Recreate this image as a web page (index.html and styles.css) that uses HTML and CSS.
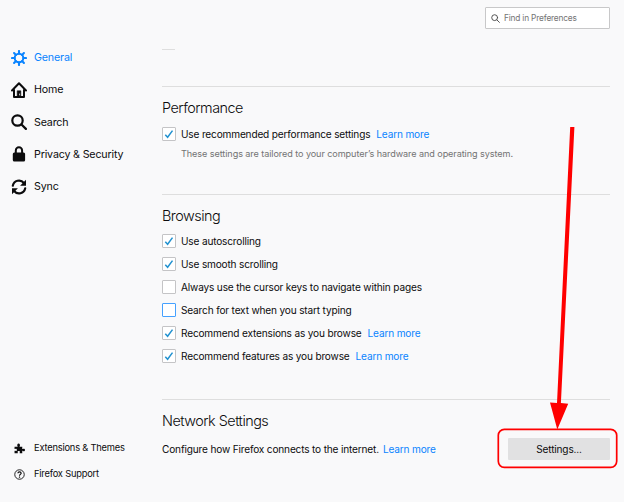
FILE: index.html
```html
<!DOCTYPE html>
<html lang="en">
<head>
<meta charset="utf-8">
<title>Preferences</title>
<link rel="stylesheet" href="styles.css">
</head>
<body>
<div class="page">
  <aside class="sidebar">
    <nav class="nav">
      <a class="nav-item active"><svg class="icon" viewBox="0 0 16 16" fill="none" stroke="currentColor"><circle cx="8" cy="8" r="4.300" stroke-width="2"/><path d="M8 1v2.500M8 12.500V15M1 8h2.500M12.500 8H15M3.100 3.100l1.800 1.800M11.100 11.100l1.800 1.800M3.100 12.900l1.800-1.800M11.100 4.900l1.800-1.800" stroke-width="2.100" stroke-linecap="round"/></svg><span>General</span></a>
      <a class="nav-item"><svg class="icon" viewBox="0 0 16 16" fill="none" stroke="currentColor" stroke-width="2" stroke-linecap="round" stroke-linejoin="round"><path d="M1 8.500L8 1.300l7 7.200M3 8v7h10V8"/><path d="M6.200 15V8.800h3.600V15z" fill="currentColor" stroke-width=".6"/><path d="M8.600 12v1" stroke="#f9f9fa" stroke-width=".8"/></svg><span>Home</span></a>
      <a class="nav-item"><svg class="icon" viewBox="0 0 16 16" fill="none" stroke="currentColor" stroke-width="2.200" stroke-linecap="round"><circle cx="6.500" cy="6.500" r="5.200"/><path d="M10.500 10.500l4.400 4.400"/></svg><span>Search</span></a>
      <a class="nav-item"><svg class="icon" viewBox="0 0 16 16"><path d="M4.800 7V4.500a3.150 3.150 0 0 1 6.300 0V7" fill="none" stroke="currentColor" stroke-width="2"/><rect x="1.800" y="6.500" width="12.300" height="9" rx="1.500" fill="currentColor"/></svg><span>Privacy &amp; Security</span></a>
      <a class="nav-item"><svg class="icon" viewBox="0 0 16 16"><path d="M1.800 6.800A6.300 6.300 0 0 1 12.900 4M14.200 9.200A6.300 6.300 0 0 1 3.100 12" fill="none" stroke="currentColor" stroke-width="2.100" stroke-linecap="round"/><path d="M15 .8v5.900H9.100zM1 15.200V9.300h5.900z" fill="currentColor"/></svg><span>Sync</span></a>
    </nav>
    <nav class="links">
      <a class="link-item"><svg class="small-icon" viewBox="0 0 16 16" fill="currentColor"><path d="M.8 5.500h3.900c.7 0 .7-.6.3-1.100C4.200 3 5 .8 6.700.8s2.600 2.200 1.700 3.600c-.4.5-.4 1.100.4 1.100H12v2.700c0 .7.600.8 1.100.4C14.300 7.700 16 8.400 16 10s-1.700 2.500-2.900 1.500c-.5-.4-1.100-.3-1.100.4V15H8.800c-.8 0-.7-.6-.4-1.100.7-1.200-.2-2.100-1.500-2.100s-2.200.9-1.500 2.100c.3.500.4 1.100-.4 1.100H.8v-3.200c0-.6.500-.7 1-.4 1.400.6 2.400-.2 2.400-1.400S3.200 8 1.800 8.600c-.5.300-1 .2-1-.4z"/></svg><span>Extensions &amp; Themes</span></a>
      <a class="link-item"><svg class="small-icon" viewBox="0 0 16 16" fill="none" stroke="currentColor"><circle cx="8" cy="8" r="6.900" stroke-width="1.300"/><path d="M5.700 6.200C5.700 3.400 10.400 3.400 10.400 6.200 10.400 7.800 8 7.800 8 9.700" stroke-width="1.700"/><circle cx="8" cy="11.800" r=".6" fill="currentColor"/></svg><span>Firefox Support</span></a>
    </nav>
  </aside>
  <main class="content">
    <div class="search"><svg class="search-icon" viewBox="0 0 16 16" fill="none" stroke="currentColor" stroke-width="1.700" stroke-linecap="round"><circle cx="6.500" cy="6.500" r="5.200"/><path d="M10.400 10.400l4.500 4.500"/></svg><span>Find in Preferences</span></div>
    <div class="fragment"></div>
    <section class="performance">
      <h2>Performance</h2>
      <div class="row"><span class="box"><svg viewBox="0 0 12 12"><path d="M2.300 6.800L4.600 9.300 9.500 2.600"/></svg></span><span class="label">Use recommended performance settings</span><a class="label more">Learn more</a></div>
      <p class="hint">These settings are tailored to your computer’s hardware and operating system.</p>
    </section>
    <section class="browsing">
      <h2>Browsing</h2>
      <div class="row"><span class="box"><svg viewBox="0 0 12 12"><path d="M2.300 6.800L4.600 9.300 9.500 2.600"/></svg></span><span class="label">Use autoscrolling</span></div>
      <div class="row"><span class="box"><svg viewBox="0 0 12 12"><path d="M2.300 6.800L4.600 9.300 9.500 2.600"/></svg></span><span class="label">Use smooth scrolling</span></div>
      <div class="row"><span class="box"></span><span class="label">Always use the cursor keys to navigate within pages</span></div>
      <div class="row"><span class="box focused"></span><span class="label">Search for text when you start typing</span></div>
      <div class="row"><span class="box"><svg viewBox="0 0 12 12"><path d="M2.300 6.800L4.600 9.300 9.500 2.600"/></svg></span><span class="label">Recommend extensions as you browse</span><a class="label more">Learn more</a></div>
      <div class="row"><span class="box"><svg viewBox="0 0 12 12"><path d="M2.300 6.800L4.600 9.300 9.500 2.600"/></svg></span><span class="label">Recommend features as you browse</span><a class="label more">Learn more</a></div>
    </section>
    <section class="network">
      <h2>Network Settings</h2>
      <div class="network-row"><span>Configure how Firefox connects to the internet.</span><a class="more near">Learn more</a><button class="button">Settings...</button></div>
    </section>
  </main>
  <svg class="annotation" viewBox="0 0 624 502"><path d="M570.200 127h4.200l-13.500 276 7.300.700L557.300 429.500 550 402.500l7 .5z" fill="#f00"/><rect x="498.300" y="429.300" width="118.400" height="38" rx="6" fill="none" stroke="#f00" stroke-width="1.700"/></svg>
</div>
</body>
</html>
```
FILE: styles.css
```css
* { box-sizing: border-box; }
body { margin: 0; background: #f9f9fa; color: #0c0c0d; font: 10.1px/16px Inter, "Liberation Sans", sans-serif; letter-spacing: -0.17px; }
.page { position: relative; display: grid; grid-template-columns: 162px 448px; width: 624px; height: 502px; overflow: hidden; white-space: nowrap; }
.sidebar { display: flex; flex-direction: column; justify-content: space-between; padding: 41.400px 0 15px 11px; }
.nav-item { display: flex; align-items: center; height: 32.250px; gap: 7px; font-size: 10.700px; }
.nav-item span { padding-top: 1.300px; }
.active { color: #0a84ff; }
.icon { width: 16px; height: 16px; }
.link-item { display: flex; align-items: center; height: 26px; gap: 9px; padding-left: 3px; font-size: 9.300px; letter-spacing: -0.2px; }
.small-icon { width: 11px; height: 11px; }
.content { display: flex; flex-direction: column; }
.search { display: flex; align-items: center; align-self: flex-end; gap: 4px; width: 125px; height: 22px; margin-top: 7px; padding-left: 5px; border: 1px solid #c8c8c9; border-radius: 1px; background: #fff; color: #737373; font-size: 8.300px; }
.search-icon { width: 9px; height: 9px; color: #4d4d4d; }
.fragment { width: 13px; height: 1px; margin: 20px 0 36px; background: #dedede; }
section { border-top: 1px solid #dedede; padding-top: 10px; }
h2 { margin: 0; font-size: 14.400px; font-weight: 350; line-height: 22px; letter-spacing: -0.510px; }
.row { display: flex; align-items: center; height: 23px; }
.label { padding-bottom: 1.500px; }
.performance { height: 108px; }
.browsing { height: 205px; }
.performance h2 { margin-bottom: 4px; }
.browsing h2 { margin-bottom: 3px; }
.box { width: 14px; height: 14px; margin: 0 5px 1px 0; border: 1px solid #c4c4c6; border-radius: 1px; background: #fff; }
.box svg { display: block; width: 12px; height: 12px; fill: none; stroke: #2292d0; stroke-width: 1.500; }
.focused { border-color: #45a1ff; }
.more { margin-left: 6px; color: #0a84ff; }
.hint { margin: 0 0 0 19px; color: #737373; font-size: 9.100px; letter-spacing: -0.08px; }
.network-row { display: flex; align-items: center; height: 22px; margin-top: 6px; }
.near { margin-left: 4px; }
.button { width: 102px; height: 22px; margin-left: auto; padding: 0 0 1px; border: 0; border-radius: 1px; background: #e1e1e2; color: inherit; font: inherit; letter-spacing: inherit; }
.annotation { position: absolute; left: 0; top: 0; width: 624px; height: 502px; pointer-events: none; }
```
